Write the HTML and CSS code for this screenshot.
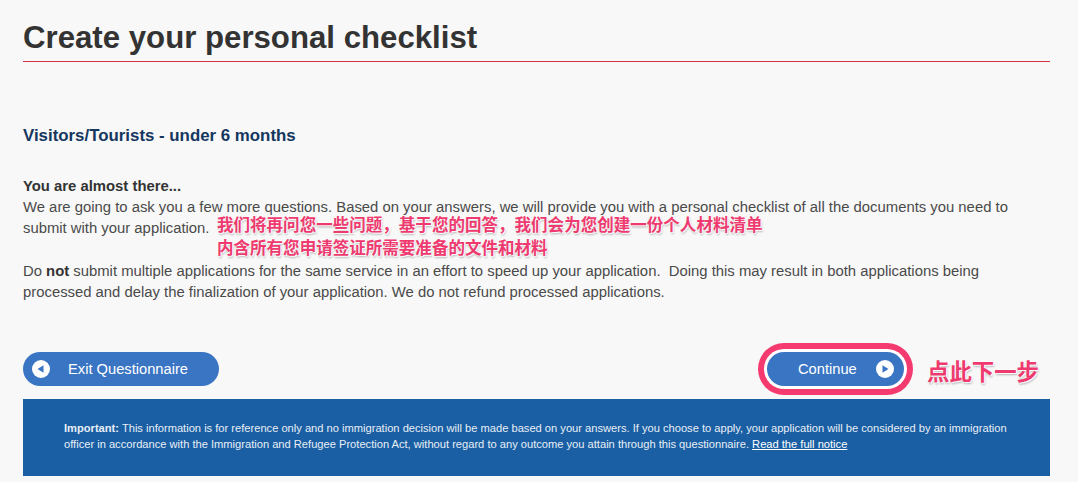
FILE: index.html
```html
<!DOCTYPE html>
<html lang="en">
<head>
    <meta charset="UTF-8">
    <title>Create your personal checklist</title>
    <link rel="stylesheet" href="styles.css">
</head>
<body>
<div class="page">
    <div class="titleBar">
        <h1 class="pageTitle">Create your personal checklist</h1>
    </div>
    <h2 class="subTitle">Visitors/Tourists - under 6 months</h2>
    <div class="intro">
        <p><strong>You are almost there...</strong><br>
        We are going to ask you a few more questions. Based on your answers, we will provide you with a personal checklist of all the documents you need to submit with your application.</p>
        <p>Do <strong>not</strong> submit multiple applications for the same service in an effort to speed up your application.&nbsp; Doing this may result in both applications being processed and delay the finalization of your application. We do not refund processed applications.</p>
        <div class="note noteIntro">我们将再问您一些问题，基于您的回答，我们会为您创建一份个人材料清单<br>内含所有您申请签证所需要准备的文件和材料</div>
    </div>
    <div class="actions">
        <a class="btn btnExit">
            <svg class="btnIcon" viewBox="0 0 18 18"><circle cx="9" cy="9" r="9" fill="#fff"/><path d="M5.5 9l6-3.8v7.6z" fill="#3a75c4"/></svg>
            <span>Exit Questionnaire</span>
        </a>
        <div class="continueWrap">
            <a class="btn btnContinue">
                <span>Continue</span>
                <svg class="btnIcon" viewBox="0 0 18 18"><circle cx="9" cy="9" r="9" fill="#fff"/><path d="M12.5 9l-6-3.8v7.6z" fill="#3a75c4"/></svg>
            </a>
            <div class="note noteNext">点此下一步</div>
        </div>
    </div>
    <div class="notice">
        <p><strong>Important:</strong> This information is for reference only and no immigration decision will be made based on your answers. If you choose to apply, your application will be considered by an immigration officer in accordance with the Immigration and Refugee Protection Act, without regard to any outcome you attain through this questionnaire. <a href="#">Read the full notice</a></p>
    </div>
</div>
</body>
</html>
```
FILE: styles.css
```css
html, body {
    margin: 0;
    height: 482px;
    overflow: hidden;
    background: #f8f8f8;
}
.page {
    margin: 0 28px 0 23px;
    font-family: "Liberation Sans", Arial, sans-serif;
    color: #4a4a4a;
}
.titleBar {
    height: 62px;
    box-sizing: border-box;
    padding-top: 19px;
    background: linear-gradient(#f8f8f8 61px, #d9303f 61px);
}
.pageTitle {
    margin: 0;
    line-height: 37px;
    font-size: 31.2px;
    font-weight: bold;
    color: #333;
}
.subTitle {
    margin: 64px 0 0;
    line-height: 20px;
    font-size: 16.85px;
    font-weight: bold;
    color: #14365f;
}
.intro {
    position: relative;
    margin-top: 30px;
    font-size: 14.85px;
    line-height: 21.2px;
}
.intro p {
    margin: 0 0 21px;
}
.intro strong {
    color: #333;
}
.note {
    font-family: "Noto Sans CJK SC", sans-serif;
    font-weight: 700;
    color: #ee3a6e;
    text-shadow: 1px 1px 1px #fff, 0 0 2px #fff, 1px 2px 2px rgba(0, 0, 0, .3);
}
.noteIntro {
    position: absolute;
    top: 37px;
    left: 194px;
    font-size: 16.55px;
    line-height: 23px;
    white-space: nowrap;
}
.actions {
    display: flex;
    justify-content: space-between;
    align-items: center;
    margin-top: 49px;
    height: 34px;
}
.btn {
    display: flex;
    align-items: center;
    height: 34px;
    box-sizing: border-box;
    border-radius: 17px;
    background: #3a75c4;
    color: #fff;
    font-size: 14.7px;
}
.btnIcon {
    width: 18px;
    height: 18px;
}
.btnExit {
    width: 196px;
    padding-left: 9px;
    gap: 18px;
}
.continueWrap {
    position: relative;
    margin-right: 146px;
}
.btnContinue {
    width: 137px;
    padding: 0 10px 0 31px;
    justify-content: space-between;
    box-shadow: 0 0 0 3px #fff, 0 0 0 9px #f53a70;
}
.noteNext {
    position: absolute;
    left: 160px;
    top: 3px;
    font-size: 22.4px;
    line-height: 30px;
    white-space: nowrap;
}
.notice {
    margin-top: 13px;
    height: 77px;
    box-sizing: border-box;
    padding: 21px 40px 0 41px;
    background: #1a5fa4;
    color: #e8eef5;
    font-size: 11.13px;
    line-height: 16px;
}
.notice p {
    margin: 0;
}
.notice a {
    color: #fff;
}
```
